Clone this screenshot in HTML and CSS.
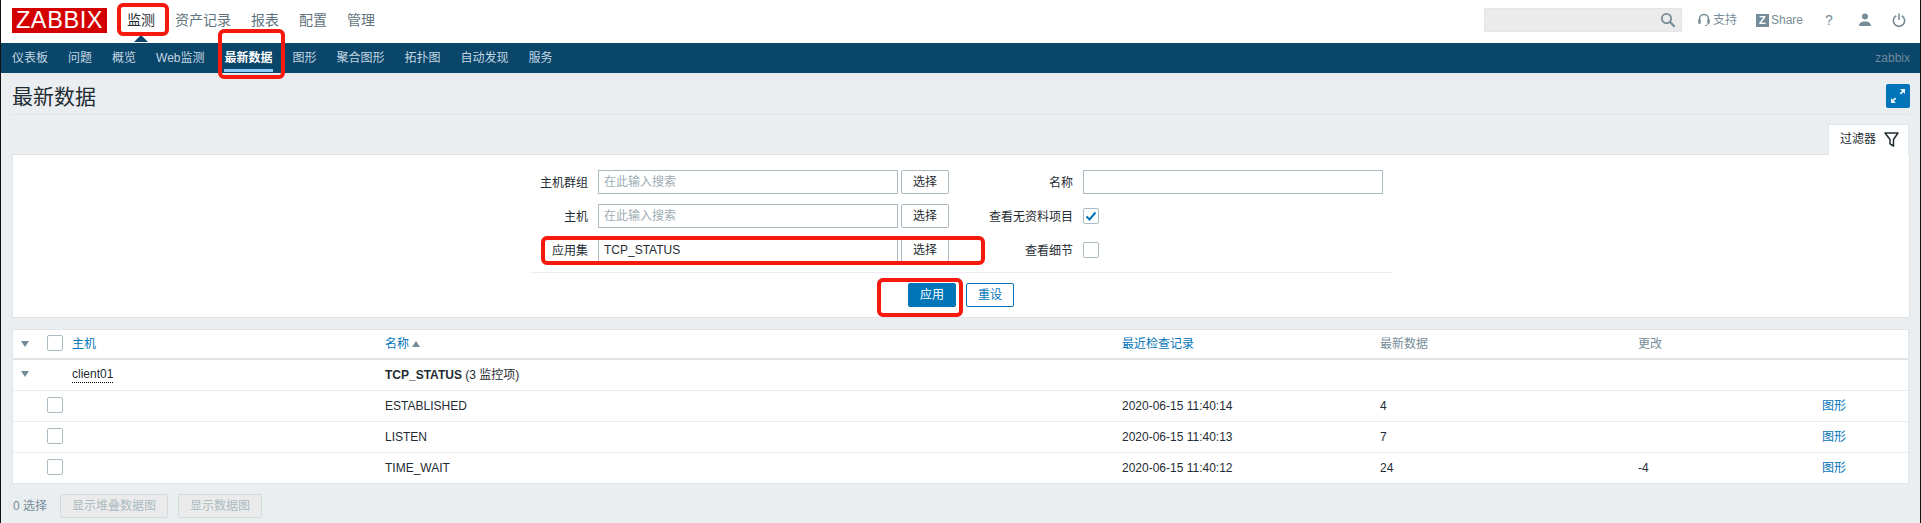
FILE: index.html
```html
<!DOCTYPE html>
<html lang="zh">
<head>
<meta charset="utf-8">
<title>最新数据</title>
<link rel="stylesheet" href="styles.css">
</head>
<body>
<div class="frame">
  <header class="top">
    <div class="logo">ZABBIX</div>
    <nav class="topnav">
      <a class="on">监测</a><a>资产记录</a><a>报表</a><a>配置</a><a>管理</a>
    </nav>
    <div class="tools">
      <div class="search">
        <svg class="ic-search" width="16" height="16" viewBox="0 0 16 16"><circle cx="6.5" cy="6.5" r="4.6" fill="none" stroke="#768d99" stroke-width="1.8"/><path d="M10 10l4.6 4.6" stroke="#768d99" stroke-width="2.2" fill="none"/></svg>
      </div>
      <a class="tool support"><svg width="12" height="14" viewBox="0 0 12 14"><path d="M1.5 9V6a4.5 4.5 0 0 1 9 0v3" fill="none" stroke="#768d99" stroke-width="1.6"/><rect x="0.3" y="6.5" width="2.4" height="4.5" rx="1" fill="#768d99"/><rect x="9.3" y="6.5" width="2.4" height="4.5" rx="1" fill="#768d99"/><path d="M10 11c-.5 1.2-1.6 1.6-3 1.6" fill="none" stroke="#768d99"/></svg>支持</a>
      <a class="tool share"><span class="zbox">Z</span>Share</a>
      <a class="tool help">?</a>
      <a class="tool user"><svg width="14" height="14" viewBox="0 0 14 14"><circle cx="7" cy="3.6" r="3" fill="#768d99"/><path d="M1 13c0-3.4 2.6-4.6 6-4.6s6 1.200 6 4.600z" fill="#768d99"/></svg></a>
      <a class="tool power"><svg width="14" height="14" viewBox="0 0 14 14"><path d="M4.300 2.800a5.600 5.600 0 1 0 5.400 0" fill="none" stroke="#768d99" stroke-width="1.600"/><path d="M7 0.500v6.500" stroke="#768d99" stroke-width="1.600"/></svg></a>
    </div>
  </header>

  <nav class="subnav">
    <div class="sublinks">
      <a>仪表板</a><a>问题</a><a>概览</a><a>Web监测</a><a class="on">最新数据</a><a>图形</a><a>聚合图形</a><a>拓扑图</a><a>自动发现</a><a>服务</a>
    </div>
    <span class="server">zabbix</span>
  </nav>

  <main class="content">
    <div class="titlebar">
      <h1>最新数据</h1>
      <button class="fullscreen" type="button" aria-label="全屏">
        <svg width="18" height="18" viewBox="0 0 18 18"><path d="M11 2h5v5l-1.700-1.700-2.300 2.300-1.300-1.300 2.300-2.300z" fill="#e6f1f8"/><path d="M7 16H2v-5l1.700 1.700 2.300-2.300 1.300 1.300-2.300 2.300z" fill="#e6f1f8"/></svg>
      </button>
    </div>

    <div class="tabrow">
      <div class="tab">过滤器
        <svg width="15" height="15" viewBox="0 0 15 15"><path d="M1 1h13L9.500 7.500V14L6 11.800V7.500z" fill="none" stroke="#1f2c33" stroke-width="1.500" stroke-linejoin="round"/></svg>
      </div>
    </div>

    <section class="filter">
      <form class="form">
        <div class="grid">
          <label>主机群组</label>
          <div class="field"><span class="input ph">在此输入搜索</span><span class="btn">选择</span></div>
          <label>名称</label>
          <span class="input wide"></span>

          <label>主机</label>
          <div class="field"><span class="input ph">在此输入搜索</span><span class="btn">选择</span></div>
          <label>查看无资料项目</label>
          <div class="chkcell"><span class="chk"><svg width="14" height="14" viewBox="0 0 14 14"><path d="M2.500 7.500l3 3 6-7" fill="none" stroke="#0275b8" stroke-width="2"/></svg></span></div>

          <label>应用集</label>
          <div class="field"><span class="input">TCP_STATUS</span><span class="btn">选择</span></div>
          <label>查看细节</label>
          <div class="chkcell"><span class="chk"></span></div>
        </div>
        <div class="actions">
          <span class="apply">应用</span><span class="reset">重设</span>
        </div>
      </form>
    </section>

    <table class="data">
      <colgroup>
        <col class="c-arrow"><col class="c-chk"><col class="c-host"><col class="c-name"><col class="c-time"><col class="c-last"><col class="c-change"><col class="c-act">
      </colgroup>
      <thead>
        <tr>
          <th class="arrow"><i class="tri"></i></th>
          <th class="cc"><span class="chk"></span></th>
          <th><a>主机</a></th>
          <th><a>名称</a><i class="sort"></i></th>
          <th><a>最近检查记录</a></th>
          <th>最新数据</th>
          <th>更改</th>
          <th></th>
        </tr>
      </thead>
      <tbody>
        <tr>
          <td class="arrow"><i class="tri"></i></td>
          <td></td>
          <td><span class="hostlink">client01</span></td>
          <td><b>TCP_STATUS</b> (3 监控项)</td>
          <td></td><td></td><td></td><td></td>
        </tr>
        <tr>
          <td></td><td class="cc"><span class="chk"></span></td><td></td>
          <td>ESTABLISHED</td><td>2020-06-15 11:40:14</td><td>4</td><td></td><td><a>图形</a></td>
        </tr>
        <tr>
          <td></td><td class="cc"><span class="chk"></span></td><td></td>
          <td>LISTEN</td><td>2020-06-15 11:40:13</td><td>7</td><td></td><td><a>图形</a></td>
        </tr>
        <tr>
          <td></td><td class="cc"><span class="chk"></span></td><td></td>
          <td>TIME_WAIT</td><td>2020-06-15 11:40:12</td><td>24</td><td>-4</td><td><a>图形</a></td>
        </tr>
      </tbody>
    </table>

    <div class="footer">
      <span class="count">0 选择</span>
      <span class="dis">显示堆叠数据图</span>
      <span class="dis">显示数据图</span>
    </div>
  </main>

  <div class="mark m-nav"></div>
  <div class="mark m-sub"></div>
  <div class="mark m-app"></div>
  <div class="mark m-apply"></div>
</div>
</body>
</html>
```
FILE: styles.css
```css
* { box-sizing: border-box; }
html, body { margin: 0; padding: 0; }
body {
  background: #ebeef0;
  color: #1f2c33;
  font: 12px/14px "Liberation Sans", "Noto Sans CJK SC", sans-serif;
  overflow: hidden;
}
.frame {
  position: relative;
  width: 1921px;
  height: 523px;
  border-left: 1px solid #111;
  border-right: 1px solid #111;
  overflow: hidden;
}
a { color: inherit; text-decoration: none; }

/* top bar */
.top {
  display: flex;
  align-items: center;
  height: 43px;
  background: #fff;
  padding-left: 11px;
  position: relative;
}
.logo {
  width: 95px;
  height: 25px;
  margin-top: -2px;
  background: #d40000;
  color: #fff;
  font-size: 23.5px;
  line-height: 25px;
  letter-spacing: 0.6px;
  text-align: center;
  white-space: nowrap;
}
.topnav {
  display: flex;
  gap: 20px;
  margin-left: 20px;
  margin-top: -3px;
  font-size: 14px;
  line-height: 18px;
  color: #5f7480;
}
.topnav .on { color: #1f2c33; position: relative; }
.topnav .on::after {
  content: "";
  position: absolute;
  left: 7px;
  top: 24px;
  border-left: 7px solid transparent;
  border-right: 7px solid transparent;
  border-bottom: 7px solid #0a466a;
}
.tools {
  display: flex;
  align-items: center;
  margin-left: auto;
  margin-top: -3px;
  height: 24px;
  color: #768d99;
}
.search {
  display: flex;
  align-items: center;
  justify-content: flex-end;
  width: 198px;
  height: 24px;
  padding-right: 5px;
  background: #ebebeb;
  border: 1px solid #e4e7ea;
}
.tool { display: flex; align-items: center; }
.support { margin-left: 16px; gap: 3px; font-size: 12px; }
.share { margin-left: 19px; gap: 2px; font-size: 12px; }
.zbox {
  display: block;
  width: 13px;
  height: 13px;
  background: #768d99;
  color: #fff;
  font-size: 11px;
  font-weight: bold;
  line-height: 13px;
  text-align: center;
}
.help { margin-left: 19px; font-size: 14px; width: 14px; justify-content: center; }
.user { margin-left: 22px; }
.power { margin-left: 20px; margin-right: 14px; }

/* sub nav */
.subnav {
  display: flex;
  align-items: flex-start;
  justify-content: space-between;
  height: 30px;
  background: #0a466a;
  padding: 0 10px 0 11px;
}
.sublinks { display: flex; gap: 20px; color: #c3d6e2; }
.sublinks a { display: block; height: 29px; padding-top: 8px; position: relative; }
.sublinks .on { color: #fff; font-weight: bold; }
.sublinks .on::after {
  content: "";
  position: absolute;
  left: -1px;
  right: 0;
  bottom: 0;
  height: 3px;
  background: #8fcbf5;
}
.server { padding-top: 8px; color: #6f8a9c; }

/* content */
.content { padding: 0 10px 0 11px; }
.titlebar {
  display: flex;
  align-items: center;
  justify-content: space-between;
  height: 42px;
  border-bottom: 1px solid #dfe4e7;
}
.titlebar h1 {
  margin: 0;
  font-size: 21px;
  line-height: 24px;
  font-weight: normal;
  position: relative;
  top: 3px;
}
.fullscreen {
  display: flex;
  align-items: center;
  justify-content: center;
  width: 24px;
  height: 24px;
  margin-top: 4px;
  padding: 0;
  border: 0;
  border-radius: 2px;
  background: #0275b8;
}
.tabrow {
  display: flex;
  justify-content: flex-end;
  padding-top: 9px;
}
.tab {
  display: flex;
  justify-content: space-between;
  width: 81px;
  height: 31px;
  margin-right: 1px;
  margin-bottom: -1px;
  padding: 7px 9px 0 11px;
  background: #fff;
  border: 1px solid #dfe4e7;
  border-bottom: 0;
  position: relative;
  z-index: 1;
}
.filter {
  background: #fff;
  border: 1px solid #dfe4e7;
  height: 164px;
  padding-top: 15px;
}
.form { width: 862px; margin: 0 auto; }
.grid {
  display: grid;
  grid-template-columns: 58px 351px 114px 300px;
  column-gap: 10px;
  row-gap: 10px;
  grid-auto-rows: 24px;
  padding-bottom: 10px;
  border-bottom: 1px solid #ebeef0;
  padding-right: 9px;
}
.grid label {
  display: flex;
  align-items: center;
  justify-content: flex-end;
  padding-top: 1px;
  white-space: nowrap;
}
.field { display: flex; gap: 3px; }
.input {
  display: block;
  height: 24px;
  flex: 1;
  padding: 0 5px;
  line-height: 23px;
  background: #fff;
  border: 1px solid #acbbc2;
}
.ph { color: #9eadb5; }
.wide { width: 300px; }
.btn {
  display: block;
  width: 48px;
  height: 24px;
  line-height: 23px;
  text-align: center;
  background: #fff;
  color: #1f2c33;
  border: 1px solid #acbbc2;
  border-radius: 2px;
}
.chkcell { display: flex; align-items: center; }
.chk {
  display: flex;
  align-items: center;
  justify-content: center;
  width: 16px;
  height: 16px;
  background: #fff;
  border: 1px solid #acbbc2;
  border-radius: 2px;
}
.actions {
  display: flex;
  justify-content: center;
  gap: 10px;
  padding-top: 10px;
  padding-left: 0;
}
.apply, .reset {
  display: block;
  width: 48px;
  height: 24px;
  line-height: 23px;
  text-align: center;
  border: 1px solid #0275b8;
  border-radius: 2px;
}
.apply { background: #0275b8; color: #fff; }
.reset { background: #fff; color: #0275b8; }

/* table */
.data {
  width: 1897px;
  margin-top: 11px;
  table-layout: fixed;
  border-collapse: separate;
  border-spacing: 0;
  background: #fff;
  border: 1px solid #dfe4e7;
}
.c-arrow { width: 29px; }
.c-chk { width: 25px; }
.c-host { width: 313px; }
.c-name { width: 737px; }
.c-time { width: 258px; }
.c-last { width: 258px; }
.c-change { width: 184px; }
.data th, .data td {
  padding: 0 5px;
  text-align: left;
  font-weight: normal;
  white-space: nowrap;
}
.data th {
  height: 30px;
  color: #768d99;
  border-bottom: 2px solid #dfe4e7;
}
.data td {
  height: 31px;
  border-bottom: 1px solid #ebeef0;
}
.data tbody tr:last-child td { height: 30px; border-bottom: 0; }
.data a { color: #0275b8; }
.data .arrow { padding-left: 8px; }
.data .cc { padding-bottom: 2px; }
.data td.arrow { vertical-align: top; padding-top: 11px; }
.tri {
  display: block;
  width: 0;
  border-left: 4px solid transparent;
  border-right: 4px solid transparent;
  border-top: 6px solid #768d99;
}
.sort {
  display: inline-block;
  margin-left: 3px;
  vertical-align: 1px;
  border-left: 4px solid transparent;
  border-right: 4px solid transparent;
  border-bottom: 6px solid #768d99;
}
.hostlink { border-bottom: 1px dotted #000; padding-bottom: 1px; display: inline-block; }

/* footer */
.footer {
  display: flex;
  align-items: center;
  gap: 10px;
  margin-top: 10px;
  height: 24px;
  padding-left: 1px;
  color: #768d99;
}
.count { margin-right: 3px; }
.dis {
  display: block;
  height: 24px;
  padding: 0 11px;
  line-height: 22px;
  color: #acbbc2;
  background: #ebebeb;
  border: 1px solid #d3dadd;
  border-radius: 2px;
}

/* annotation rectangles drawn over the screenshot */
.mark {
  position: absolute;
  border: 4px solid #f61a0e;
  border-radius: 6px;
  pointer-events: none;
  z-index: 5;
}
.m-nav { left: 116px; top: 3px; width: 52px; height: 33px; }
.m-sub { left: 217px; top: 29px; width: 67px; height: 50px; }
.m-app { left: 540px; top: 236px; width: 444px; height: 29px; }
.m-apply { left: 876px; top: 278px; width: 86px; height: 39px; }
```
